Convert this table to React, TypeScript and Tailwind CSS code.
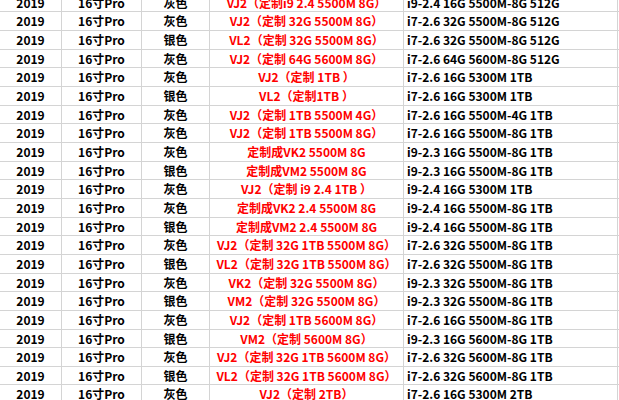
const rows: [string, string, string][] = [
  ["灰色", "VJ2（定制i9 2.4 5500M 8G）", "i9-2.4 16G 5500M-8G 512G"],
  ["灰色", "VJ2（定制 32G 5500M 8G）", "i7-2.6 32G 5500M-8G 512G"],
  ["银色", "VL2（定制 32G 5500M 8G）", "i7-2.6 32G 5500M-8G 512G"],
  ["灰色", "VJ2（定制 64G 5600M 8G）", "i7-2.6 64G 5600M-8G 512G"],
  ["灰色", "VJ2（定制 1TB ）", "i7-2.6 16G 5300M 1TB"],
  ["银色", "VL2（定制1TB ）", "i7-2.6 16G 5300M 1TB"],
  ["灰色", "VJ2（定制 1TB 5500M 4G）", "i7-2.6 16G 5500M-4G 1TB"],
  ["灰色", "VJ2（定制 1TB 5500M 8G）", "i7-2.6 16G 5500M-8G 1TB"],
  ["灰色", "定制成VK2 5500M 8G", "i9-2.3 16G 5500M-8G 1TB"],
  ["银色", "定制成VM2 5500M 8G", "i9-2.3 16G 5500M-8G 1TB"],
  ["灰色", "VJ2（定制 i9 2.4 1TB ）", "i9-2.4 16G 5300M 1TB"],
  ["灰色", "定制成VK2 2.4 5500M 8G", "i9-2.4 16G 5500M-8G 1TB"],
  ["银色", "定制成VM2 2.4 5500M 8G", "i9-2.4 16G 5500M-8G 1TB"],
  ["灰色", "VJ2（定制 32G 1TB 5500M 8G）", "i7-2.6 32G 5500M-8G 1TB"],
  ["银色", "VL2（定制 32G 1TB 5500M 8G）", "i7-2.6 32G 5500M-8G 1TB"],
  ["灰色", "VK2（定制 32G 5500M 8G）", "i9-2.3 32G 5500M-8G 1TB"],
  ["银色", "VM2（定制 32G 5500M 8G）", "i9-2.3 32G 5500M-8G 1TB"],
  ["灰色", "VJ2（定制 1TB 5600M 8G）", "i7-2.6 16G 5500M-8G 1TB"],
  ["银色", "VM2（定制 5600M 8G）", "i9-2.3 16G 5600M-8G 1TB"],
  ["灰色", "VJ2（定制 32G 1TB 5600M 8G）", "i7-2.6 32G 5600M-8G 1TB"],
  ["银色", "VL2（定制 32G 1TB 5600M 8G）", "i7-2.6 32G 5600M-8G 1TB"],
  ["灰色", "VJ2（定制 2TB）", "i7-2.6 16G 5300M 2TB"],
];

export default function App() {
  return (
    <div className="w-[619px] h-[400px] overflow-hidden bg-white font-['Noto_Sans_CJK_SC','Noto_Sans',sans-serif] font-bold text-[12px] text-black">
      <div className="mt-[-6.3px]">
        {rows.map((r, i) => (
          // biome-ignore lint/suspicious/noArrayIndexKey: static rows
          <div key={i} className="grid grid-cols-[62px_80px_68px_194px_214px_1fr] h-[18.67px] border-b border-[#d4d4d4] leading-[18px]">
            <div className="border-r border-[#d4d4d4] text-center">2019</div>
            <div className="border-r border-[#d4d4d4] text-center">16寸Pro</div>
            <div className="border-r border-[#d4d4d4] text-center">{r[0]}</div>
            <div className="border-r border-[#d4d4d4] text-center text-[#f00] whitespace-nowrap">{r[1]}</div>
            <div className="border-r border-[#d4d4d4] pl-[3px] whitespace-nowrap">{r[2]}</div>
            <div />
          </div>
        ))}
      </div>
    </div>
  );
}
